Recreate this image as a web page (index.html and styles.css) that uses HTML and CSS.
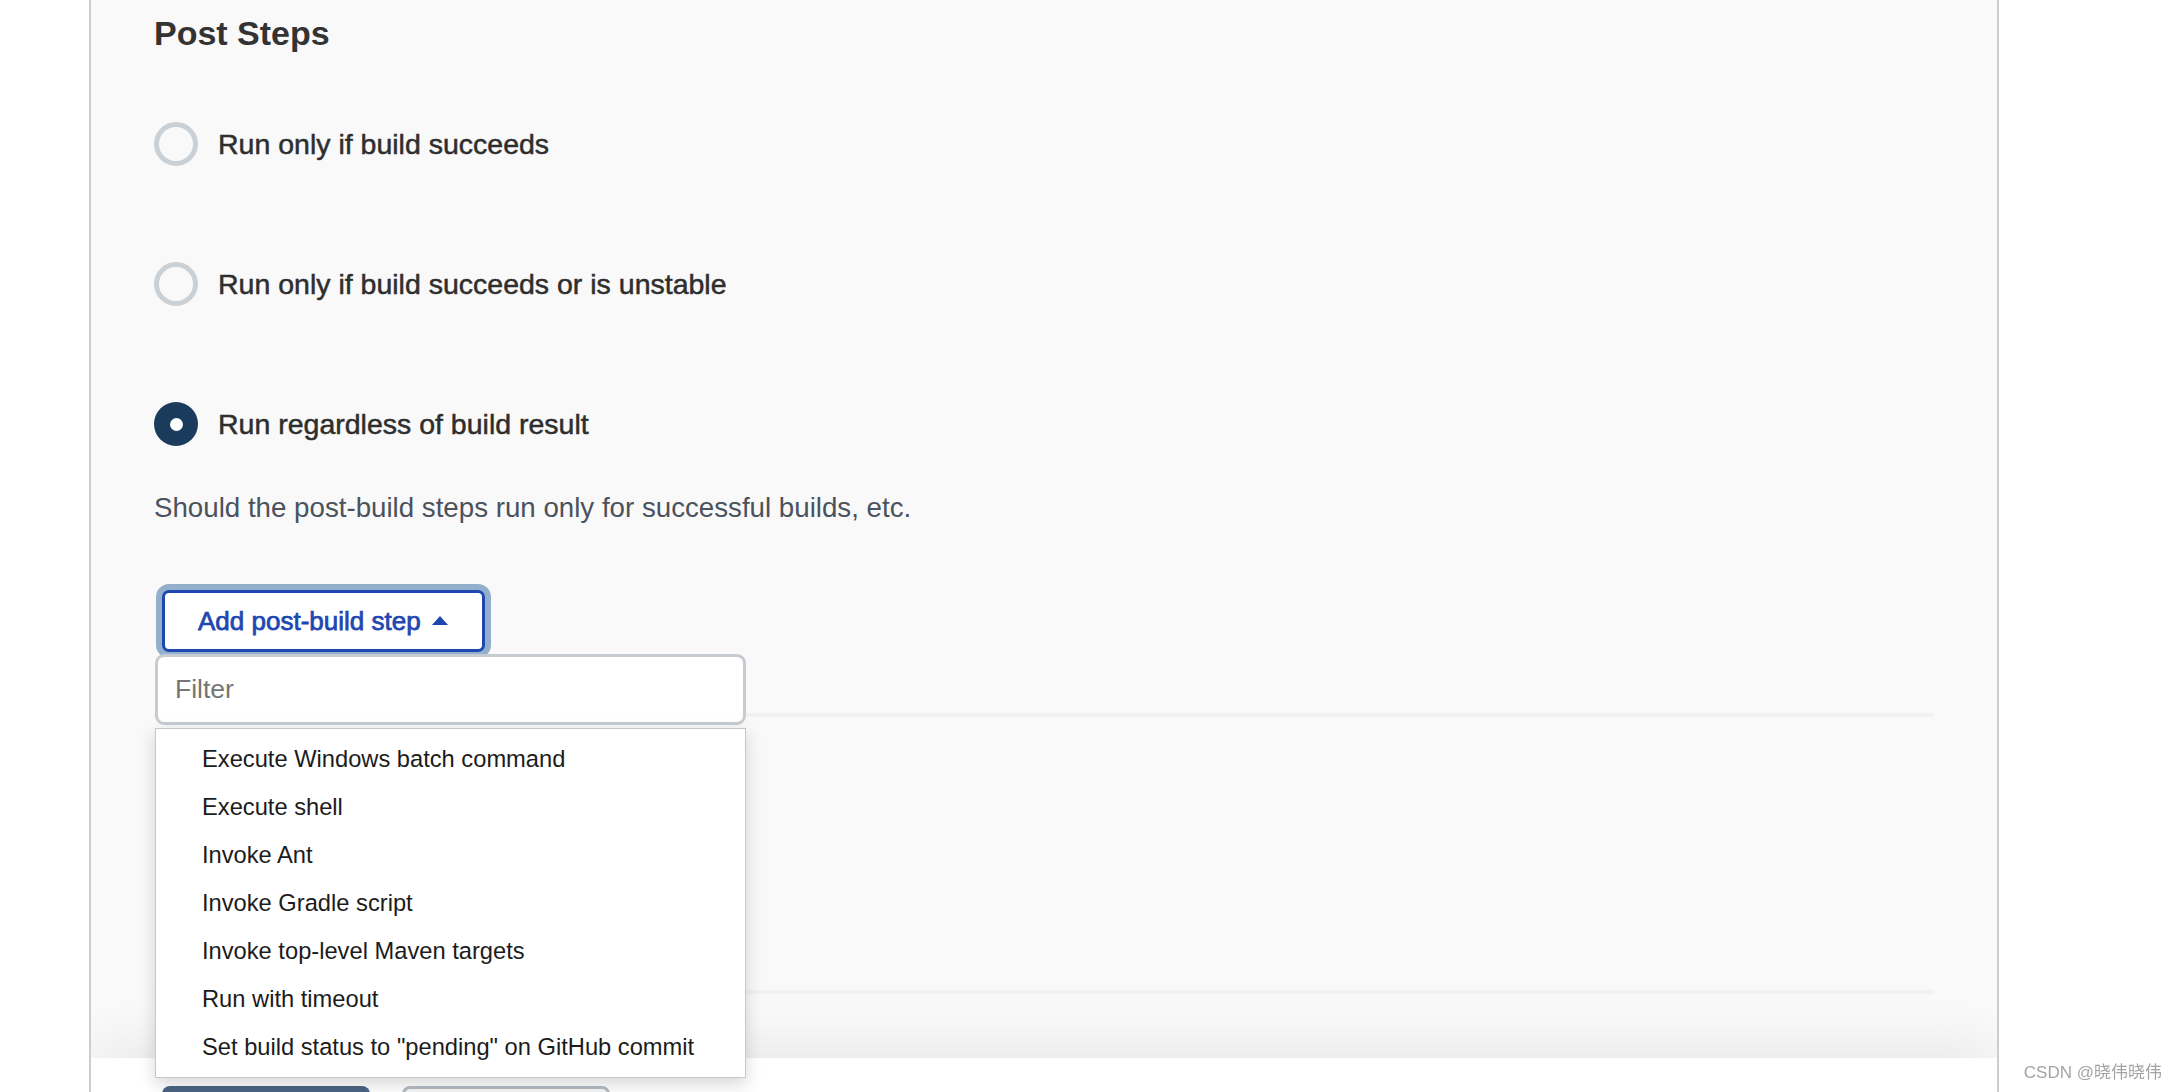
FILE: index.html
```html
<!DOCTYPE html>
<html lang="en">

<head>
    <meta charset="UTF-8">
    <meta name="viewport" content="width=device-width, initial-scale=1.0">
    <title>Post Steps</title>
    <link rel="stylesheet" href="styles.css">
</head>

<body>
    <div class="page">
        <div class="config">
            <h2 class="section-title">Post Steps</h2>

            <div class="radio-list">
                <label class="radio">
                    <span class="radio-mark"></span>
                    <span class="radio-label">Run only if build succeeds</span>
                </label>
                <label class="radio">
                    <span class="radio-mark"></span>
                    <span class="radio-label">Run only if build succeeds or is unstable</span>
                </label>
                <label class="radio checked">
                    <span class="radio-mark"></span>
                    <span class="radio-label">Run regardless of build result</span>
                </label>
            </div>

            <p class="help">Should the post-build steps run only for successful builds, etc.</p>

            <div class="add-step">
                <button class="add-btn">Add post-build step <span class="caret"></span></button>

                <!-- Dropdown -->
                <div class="step-menu">
                    <input class="filter" type="text" placeholder="Filter">
                    <ul class="menu-list">
                        <li>Execute Windows batch command</li>
                        <li>Execute shell</li>
                        <li>Invoke Ant</li>
                        <li>Invoke Gradle script</li>
                        <li>Invoke top-level Maven targets</li>
                        <li>Run with timeout</li>
                        <li>Set build status to "pending" on GitHub commit</li>
                    </ul>
                </div>
            </div>

            <div class="step-divider first"></div>
            <div class="step-divider last"></div>
        </div>

        <!-- Save / Apply, only their tops show -->
        <div class="bottom-bar">
            <button class="btn-save" aria-label="Save"></button>
            <button class="btn-apply" aria-label="Apply"></button>
        </div>
    </div>

    <div class="watermark">CSDN @晓伟晓伟</div>
</body>

</html>
```

FILE: styles.css
```css
* {
    box-sizing: border-box;
}

html,
body {
    margin: 0;
    overflow: hidden;
}

body {
    background: #fff;
    font-family: "Liberation Sans", Arial, sans-serif;
    color: #333;
}

.page {
    margin-left: 89px;
    width: 1910px;
    height: 1092px;
    border-left: 2px solid #c9ced3;
    border-right: 2px solid #c9ced3;
    display: flex;
    flex-direction: column;
    overflow: hidden;
}

.config {
    flex: 1;
    min-height: 0;
    background: #f9f9f9;
    padding: 0 63px;
}

.section-title {
    margin: 13px 0 0;
    font-size: 34px;
    line-height: 41px;
    font-weight: bold;
    color: #333;
}

.radio-list {
    margin-top: 68px;
    display: flex;
    flex-direction: column;
    gap: 96px;
}

.radio {
    display: flex;
    align-items: center;
    gap: 20px;
    height: 44px;
    font-size: 28.5px;
    color: #2e2e2e;
    -webkit-text-stroke: 0.5px #2e2e2e;
}

.radio-mark {
    width: 44px;
    height: 44px;
    border-radius: 50%;
    border: 5px solid #c9d1d6;
    flex-shrink: 0;
}

.radio.checked .radio-mark {
    background: #1b3b5c;
    border: none;
    display: flex;
    align-items: center;
    justify-content: center;
}

.radio.checked .radio-mark::after {
    content: "";
    width: 13px;
    height: 13px;
    border-radius: 50%;
    background: #fff;
}

.help {
    margin: 45px 0 0;
    font-size: 27.7px;
    line-height: 33px;
    color: #4a525c;
}

.add-step {
    position: relative;
    margin: 66px 0 0 8px;
    width: 323px;
}

.add-btn {
    display: flex;
    align-items: center;
    gap: 11px;
    width: 323px;
    height: 62px;
    padding: 0 30px 0 33px;
    background: #fff;
    border: 3px solid #1f47b1;
    border-radius: 7px;
    box-shadow: 0 0 0 6px #94afcb;
    color: #1f47b1;
    font-family: "Liberation Sans", Arial, sans-serif;
    font-size: 26px;
    -webkit-text-stroke: 0.75px #1f47b1;
    cursor: pointer;
}

.caret {
    width: 0;
    height: 0;
    border-left: 8.5px solid transparent;
    border-right: 8.5px solid transparent;
    border-bottom: 9px solid #1f47b1;
    margin-top: -2px;
}

.step-menu {
    position: absolute;
    top: 64px;
    left: -7px;
    width: 591px;
    z-index: 10;
}

.filter {
    display: block;
    width: 100%;
    height: 71px;
    padding: 0 17px;
    border: 3px solid #c6ccd2;
    border-radius: 9px;
    background: #fff;
    font-family: "Liberation Sans", Arial, sans-serif;
    font-size: 26.5px;
    color: #333;
    outline: none;
}

.filter::placeholder {
    color: #767676;
}

.menu-list {
    list-style: none;
    margin: 3px 0 0;
    padding: 6px 0;
    background: #fff;
    border: 1.5px solid #c2c8cd;
    box-shadow: 0 6px 16px rgba(0, 0, 0, 0.16);
}

.menu-list li {
    height: 48px;
    line-height: 48px;
    padding-left: 46px;
    font-size: 23.7px;
    color: #1c1c1c;
    white-space: nowrap;
}

.step-divider {
    border-top: 4px solid #f1f1f1;
}

.step-divider.first {
    margin-top: 61px;
    height: 277px;
}

.bottom-bar {
    position: relative;
    height: 34px;
    flex-shrink: 0;
    background: #fff;
    display: flex;
    gap: 32px;
    padding: 28px 0 0 71px;
    box-shadow: 0 0 60px rgba(0, 0, 0, 0.12);
}

.btn-save,
.btn-apply {
    width: 208px;
    height: 50px;
    flex-shrink: 0;
    border-radius: 8px;
}

.btn-save {
    background: #4b6583;
    border: none;
}

.btn-apply {
    background: #f7f7f7;
    border: 3px solid #b4bcc3;
}

.watermark {
    position: fixed;
    right: 14px;
    bottom: 7px;
    line-height: 24px;
    font-size: 17px;
    color: #a3a3a3;
    font-family: "Liberation Sans", "Noto Sans CJK SC", sans-serif;
}
```
